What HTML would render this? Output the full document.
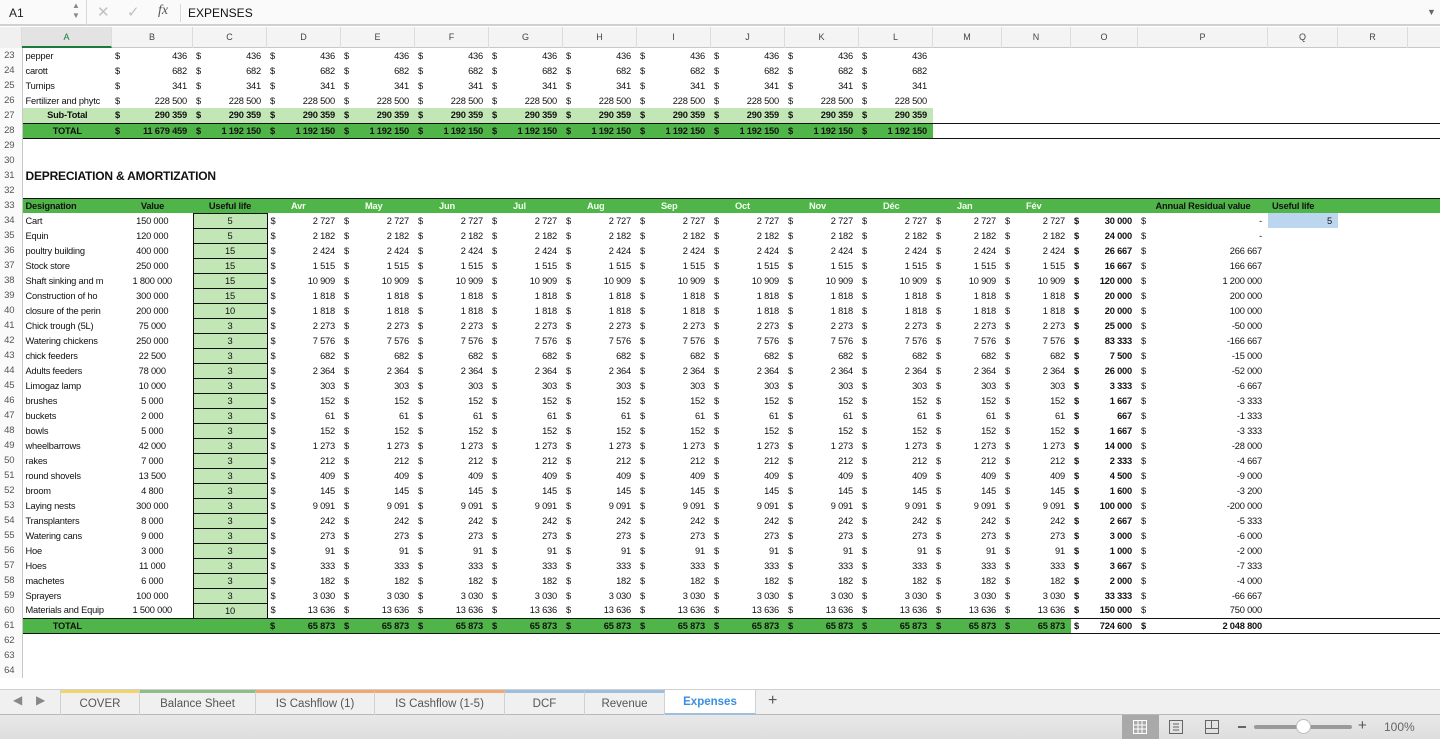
<!DOCTYPE html><html><head><meta charset="utf-8"><style>
*{margin:0;padding:0;box-sizing:border-box}
body{width:1440px;height:739px;overflow:hidden;background:#fff;font-family:"Liberation Sans",Arial,sans-serif;position:relative}
#fb{position:absolute;left:0;top:0;width:1440px;height:26px;background:#fafafa;border-bottom:2px solid #d0d0d0;font-size:12px}
#ch{position:absolute;left:0;top:27px;height:21px;width:1440px;background:#f4f4f4;border-bottom:1px solid #c8c8c8;font-size:9px;color:#444}
#ch div{position:absolute;top:0;height:21px;line-height:21px;text-align:center;border-right:1px solid #dcdcdc}
table{position:absolute;left:0;top:48px;border-collapse:collapse;table-layout:fixed;width:1440px;font-size:9.3px;letter-spacing:-0.2px}
td{height:15px;line-height:14px;padding:0 6px 0 3px;white-space:nowrap;overflow:hidden;text-align:right;color:#111}
td.h{text-align:center;padding:0 3px 0 0;color:#555;font-size:9.5px;border-right:1px solid #c8c8c8;background:#fafafa}
td.l{text-align:left}
td.c{text-align:center;padding:0}
td i{float:left;font-style:normal}
td.g{background:#c3e6b6;text-align:center;border:1px solid #111;padding:0}
tr.st td{background:#c3e6b6;font-weight:bold}
tr.tt td{background:#50b548;font-weight:bold;border-top:1px solid #111;border-bottom:1px solid #111}
tr.tt td.n{background:#fff}
tr.st td.n{background:#fff;font-weight:normal}
tr.hd td{background:#50b548;font-weight:bold;border-top:1px solid #111}
tr.hd td.w{color:#f2fff0;font-weight:bold;text-align:left;padding-left:24px}
tr td.h{background:#fafafa!important;color:#555!important;font-weight:normal!important;border-top:none!important;border-bottom:none!important}
td.b{font-weight:bold}
#tabs{position:absolute;left:0;top:689px;width:1440px;height:26px;background:#f0f0f0;border-top:1px solid #d0d0d0;border-bottom:1px solid #b8b8b8;font-size:11.5px;color:#555}
#tabs div.t{position:absolute;top:0;height:25px;line-height:22px;text-align:center;border-right:1px solid #d0d0d0;border-top:3px solid}
#sb{position:absolute;left:0;top:715px;width:1440px;height:24px;background:linear-gradient(#e8e8e8,#dedede)}
</style></head><body>
<div id="fb">
<div style="position:absolute;left:9px;top:6px;color:#222">A1</div>
<div style="position:absolute;left:72px;top:1px;font-size:8px;color:#888;line-height:10px">▲<br>▼</div>
<div style="position:absolute;left:86px;top:0;width:1px;height:26px;background:#d8d8d8"></div>
<div style="position:absolute;left:97px;top:3px;font-size:15px;color:#c0c0c0">✕</div>
<div style="position:absolute;left:127px;top:3px;font-size:15px;color:#c0c0c0">✓</div>
<div style="position:absolute;left:158px;top:3px;font-size:14px;font-style:italic;font-family:'Liberation Serif',serif;color:#555">fx</div>
<div style="position:absolute;left:180px;top:4px;width:1px;height:18px;background:#d8d8d8"></div>
<div style="position:absolute;left:188px;top:6px;color:#111">EXPENSES</div>
<div style="position:absolute;left:1427px;top:7px;font-size:9px;color:#666">▼</div>
</div>
<div id="ch">
<div style="left:0;width:22px;background:#f0f0f0"></div>
<div style="left:22px;width:90px;background:#e3e3e3;color:#1a7a3a;border-bottom:2px solid #1a7a3a">A</div>
<div style="left:112px;width:81px">B</div><div style="left:193px;width:74px">C</div><div style="left:267px;width:74px">D</div><div style="left:341px;width:74px">E</div><div style="left:415px;width:74px">F</div><div style="left:489px;width:74px">G</div><div style="left:563px;width:74px">H</div><div style="left:637px;width:74px">I</div><div style="left:711px;width:74px">J</div><div style="left:785px;width:74px">K</div><div style="left:859px;width:74px">L</div><div style="left:933px;width:69px">M</div><div style="left:1002px;width:69px">N</div><div style="left:1071px;width:67px">O</div><div style="left:1138px;width:130px">P</div><div style="left:1268px;width:70px">Q</div><div style="left:1338px;width:70px">R</div>
</div>
<table>
<colgroup><col style="width:22px"><col style="width:90px"><col style="width:81px"><col style="width:74px"><col style="width:74px"><col style="width:74px"><col style="width:74px"><col style="width:74px"><col style="width:74px"><col style="width:74px"><col style="width:74px"><col style="width:74px"><col style="width:74px"><col style="width:69px"><col style="width:69px"><col style="width:67px"><col style="width:130px"><col style="width:70px"><col style="width:70px"><col style="width:32px"></colgroup>
<tr><td class="h">23</td><td class="l">pepper</td><td><i>$</i>436</td><td><i>$</i>436</td><td><i>$</i>436</td><td><i>$</i>436</td><td><i>$</i>436</td><td><i>$</i>436</td><td><i>$</i>436</td><td><i>$</i>436</td><td><i>$</i>436</td><td><i>$</i>436</td><td><i>$</i>436</td><td></td><td></td><td></td><td></td><td></td><td></td><td></td></tr>
<tr><td class="h">24</td><td class="l">carott</td><td><i>$</i>682</td><td><i>$</i>682</td><td><i>$</i>682</td><td><i>$</i>682</td><td><i>$</i>682</td><td><i>$</i>682</td><td><i>$</i>682</td><td><i>$</i>682</td><td><i>$</i>682</td><td><i>$</i>682</td><td><i>$</i>682</td><td></td><td></td><td></td><td></td><td></td><td></td><td></td></tr>
<tr><td class="h">25</td><td class="l">Turnips</td><td><i>$</i>341</td><td><i>$</i>341</td><td><i>$</i>341</td><td><i>$</i>341</td><td><i>$</i>341</td><td><i>$</i>341</td><td><i>$</i>341</td><td><i>$</i>341</td><td><i>$</i>341</td><td><i>$</i>341</td><td><i>$</i>341</td><td></td><td></td><td></td><td></td><td></td><td></td><td></td></tr>
<tr><td class="h">26</td><td class="l">Fertilizer and phytc</td><td><i>$</i>228 500</td><td><i>$</i>228 500</td><td><i>$</i>228 500</td><td><i>$</i>228 500</td><td><i>$</i>228 500</td><td><i>$</i>228 500</td><td><i>$</i>228 500</td><td><i>$</i>228 500</td><td><i>$</i>228 500</td><td><i>$</i>228 500</td><td><i>$</i>228 500</td><td></td><td></td><td></td><td></td><td></td><td></td><td></td></tr>
<tr class="st"><td class="h">27</td><td class="c">Sub-Total</td><td><i>$</i>290 359</td><td><i>$</i>290 359</td><td><i>$</i>290 359</td><td><i>$</i>290 359</td><td><i>$</i>290 359</td><td><i>$</i>290 359</td><td><i>$</i>290 359</td><td><i>$</i>290 359</td><td><i>$</i>290 359</td><td><i>$</i>290 359</td><td><i>$</i>290 359</td><td class="n"></td><td class="n"></td><td class="n"></td><td class="n"></td><td class="n"></td><td class="n"></td><td class="n"></td></tr>
<tr class="tt"><td class="h">28</td><td class="c">TOTAL</td><td><i>$</i>11 679 459</td><td><i>$</i>1 192 150</td><td><i>$</i>1 192 150</td><td><i>$</i>1 192 150</td><td><i>$</i>1 192 150</td><td><i>$</i>1 192 150</td><td><i>$</i>1 192 150</td><td><i>$</i>1 192 150</td><td><i>$</i>1 192 150</td><td><i>$</i>1 192 150</td><td><i>$</i>1 192 150</td><td class="n"></td><td class="n"></td><td class="n"></td><td class="n"></td><td class="n"></td><td class="n"></td><td class="n"></td></tr>
<tr><td class="h">29</td><td colspan="19"></td></tr>
<tr><td class="h">30</td><td colspan="19"></td></tr>
<tr><td class="h">31</td><td class="l" colspan="4" style="font-weight:bold;font-size:12px;overflow:visible">DEPRECIATION &amp; AMORTIZATION</td><td colspan="15"></td></tr>
<tr><td class="h">32</td><td colspan="19"></td></tr>
<tr class="hd"><td class="h">33</td><td class="l">Designation</td><td class="c">Value</td><td class="c">Useful life</td><td class="w">Avr</td><td class="w">May</td><td class="w">Jun</td><td class="w">Jul</td><td class="w">Aug</td><td class="w">Sep</td><td class="w">Oct</td><td class="w">Nov</td><td class="w">Déc</td><td class="w">Jan</td><td class="w">Fév</td><td></td><td class="c">Annual Residual value</td><td class="l" style="padding-left:4px">Useful life</td><td></td><td></td></tr>
<tr><td class="h">34</td><td class="l">Cart</td><td class="c">150 000</td><td class="g">5</td><td><i>$</i>2 727</td><td><i>$</i>2 727</td><td><i>$</i>2 727</td><td><i>$</i>2 727</td><td><i>$</i>2 727</td><td><i>$</i>2 727</td><td><i>$</i>2 727</td><td><i>$</i>2 727</td><td><i>$</i>2 727</td><td><i>$</i>2 727</td><td><i>$</i>2 727</td><td class="b"><i>$</i>30 000</td><td><i>$</i>-</td><td style="background:#bcd6ef">5</td><td></td><td></td></tr>
<tr><td class="h">35</td><td class="l">Equin</td><td class="c">120 000</td><td class="g">5</td><td><i>$</i>2 182</td><td><i>$</i>2 182</td><td><i>$</i>2 182</td><td><i>$</i>2 182</td><td><i>$</i>2 182</td><td><i>$</i>2 182</td><td><i>$</i>2 182</td><td><i>$</i>2 182</td><td><i>$</i>2 182</td><td><i>$</i>2 182</td><td><i>$</i>2 182</td><td class="b"><i>$</i>24 000</td><td><i>$</i>-</td><td></td><td></td><td></td></tr>
<tr><td class="h">36</td><td class="l">poultry building</td><td class="c">400 000</td><td class="g">15</td><td><i>$</i>2 424</td><td><i>$</i>2 424</td><td><i>$</i>2 424</td><td><i>$</i>2 424</td><td><i>$</i>2 424</td><td><i>$</i>2 424</td><td><i>$</i>2 424</td><td><i>$</i>2 424</td><td><i>$</i>2 424</td><td><i>$</i>2 424</td><td><i>$</i>2 424</td><td class="b"><i>$</i>26 667</td><td><i>$</i>266 667</td><td></td><td></td><td></td></tr>
<tr><td class="h">37</td><td class="l">Stock store</td><td class="c">250 000</td><td class="g">15</td><td><i>$</i>1 515</td><td><i>$</i>1 515</td><td><i>$</i>1 515</td><td><i>$</i>1 515</td><td><i>$</i>1 515</td><td><i>$</i>1 515</td><td><i>$</i>1 515</td><td><i>$</i>1 515</td><td><i>$</i>1 515</td><td><i>$</i>1 515</td><td><i>$</i>1 515</td><td class="b"><i>$</i>16 667</td><td><i>$</i>166 667</td><td></td><td></td><td></td></tr>
<tr><td class="h">38</td><td class="l">Shaft sinking and m</td><td class="c">1 800 000</td><td class="g">15</td><td><i>$</i>10 909</td><td><i>$</i>10 909</td><td><i>$</i>10 909</td><td><i>$</i>10 909</td><td><i>$</i>10 909</td><td><i>$</i>10 909</td><td><i>$</i>10 909</td><td><i>$</i>10 909</td><td><i>$</i>10 909</td><td><i>$</i>10 909</td><td><i>$</i>10 909</td><td class="b"><i>$</i>120 000</td><td><i>$</i>1 200 000</td><td></td><td></td><td></td></tr>
<tr><td class="h">39</td><td class="l">Construction of ho</td><td class="c">300 000</td><td class="g">15</td><td><i>$</i>1 818</td><td><i>$</i>1 818</td><td><i>$</i>1 818</td><td><i>$</i>1 818</td><td><i>$</i>1 818</td><td><i>$</i>1 818</td><td><i>$</i>1 818</td><td><i>$</i>1 818</td><td><i>$</i>1 818</td><td><i>$</i>1 818</td><td><i>$</i>1 818</td><td class="b"><i>$</i>20 000</td><td><i>$</i>200 000</td><td></td><td></td><td></td></tr>
<tr><td class="h">40</td><td class="l">closure of the perin</td><td class="c">200 000</td><td class="g">10</td><td><i>$</i>1 818</td><td><i>$</i>1 818</td><td><i>$</i>1 818</td><td><i>$</i>1 818</td><td><i>$</i>1 818</td><td><i>$</i>1 818</td><td><i>$</i>1 818</td><td><i>$</i>1 818</td><td><i>$</i>1 818</td><td><i>$</i>1 818</td><td><i>$</i>1 818</td><td class="b"><i>$</i>20 000</td><td><i>$</i>100 000</td><td></td><td></td><td></td></tr>
<tr><td class="h">41</td><td class="l">Chick trough (5L)</td><td class="c">75 000</td><td class="g">3</td><td><i>$</i>2 273</td><td><i>$</i>2 273</td><td><i>$</i>2 273</td><td><i>$</i>2 273</td><td><i>$</i>2 273</td><td><i>$</i>2 273</td><td><i>$</i>2 273</td><td><i>$</i>2 273</td><td><i>$</i>2 273</td><td><i>$</i>2 273</td><td><i>$</i>2 273</td><td class="b"><i>$</i>25 000</td><td><i>$</i>-50 000</td><td></td><td></td><td></td></tr>
<tr><td class="h">42</td><td class="l">Watering chickens</td><td class="c">250 000</td><td class="g">3</td><td><i>$</i>7 576</td><td><i>$</i>7 576</td><td><i>$</i>7 576</td><td><i>$</i>7 576</td><td><i>$</i>7 576</td><td><i>$</i>7 576</td><td><i>$</i>7 576</td><td><i>$</i>7 576</td><td><i>$</i>7 576</td><td><i>$</i>7 576</td><td><i>$</i>7 576</td><td class="b"><i>$</i>83 333</td><td><i>$</i>-166 667</td><td></td><td></td><td></td></tr>
<tr><td class="h">43</td><td class="l">chick feeders</td><td class="c">22 500</td><td class="g">3</td><td><i>$</i>682</td><td><i>$</i>682</td><td><i>$</i>682</td><td><i>$</i>682</td><td><i>$</i>682</td><td><i>$</i>682</td><td><i>$</i>682</td><td><i>$</i>682</td><td><i>$</i>682</td><td><i>$</i>682</td><td><i>$</i>682</td><td class="b"><i>$</i>7 500</td><td><i>$</i>-15 000</td><td></td><td></td><td></td></tr>
<tr><td class="h">44</td><td class="l">Adults feeders</td><td class="c">78 000</td><td class="g">3</td><td><i>$</i>2 364</td><td><i>$</i>2 364</td><td><i>$</i>2 364</td><td><i>$</i>2 364</td><td><i>$</i>2 364</td><td><i>$</i>2 364</td><td><i>$</i>2 364</td><td><i>$</i>2 364</td><td><i>$</i>2 364</td><td><i>$</i>2 364</td><td><i>$</i>2 364</td><td class="b"><i>$</i>26 000</td><td><i>$</i>-52 000</td><td></td><td></td><td></td></tr>
<tr><td class="h">45</td><td class="l">Limogaz lamp</td><td class="c">10 000</td><td class="g">3</td><td><i>$</i>303</td><td><i>$</i>303</td><td><i>$</i>303</td><td><i>$</i>303</td><td><i>$</i>303</td><td><i>$</i>303</td><td><i>$</i>303</td><td><i>$</i>303</td><td><i>$</i>303</td><td><i>$</i>303</td><td><i>$</i>303</td><td class="b"><i>$</i>3 333</td><td><i>$</i>-6 667</td><td></td><td></td><td></td></tr>
<tr><td class="h">46</td><td class="l">brushes</td><td class="c">5 000</td><td class="g">3</td><td><i>$</i>152</td><td><i>$</i>152</td><td><i>$</i>152</td><td><i>$</i>152</td><td><i>$</i>152</td><td><i>$</i>152</td><td><i>$</i>152</td><td><i>$</i>152</td><td><i>$</i>152</td><td><i>$</i>152</td><td><i>$</i>152</td><td class="b"><i>$</i>1 667</td><td><i>$</i>-3 333</td><td></td><td></td><td></td></tr>
<tr><td class="h">47</td><td class="l">buckets</td><td class="c">2 000</td><td class="g">3</td><td><i>$</i>61</td><td><i>$</i>61</td><td><i>$</i>61</td><td><i>$</i>61</td><td><i>$</i>61</td><td><i>$</i>61</td><td><i>$</i>61</td><td><i>$</i>61</td><td><i>$</i>61</td><td><i>$</i>61</td><td><i>$</i>61</td><td class="b"><i>$</i>667</td><td><i>$</i>-1 333</td><td></td><td></td><td></td></tr>
<tr><td class="h">48</td><td class="l">bowls</td><td class="c">5 000</td><td class="g">3</td><td><i>$</i>152</td><td><i>$</i>152</td><td><i>$</i>152</td><td><i>$</i>152</td><td><i>$</i>152</td><td><i>$</i>152</td><td><i>$</i>152</td><td><i>$</i>152</td><td><i>$</i>152</td><td><i>$</i>152</td><td><i>$</i>152</td><td class="b"><i>$</i>1 667</td><td><i>$</i>-3 333</td><td></td><td></td><td></td></tr>
<tr><td class="h">49</td><td class="l">wheelbarrows</td><td class="c">42 000</td><td class="g">3</td><td><i>$</i>1 273</td><td><i>$</i>1 273</td><td><i>$</i>1 273</td><td><i>$</i>1 273</td><td><i>$</i>1 273</td><td><i>$</i>1 273</td><td><i>$</i>1 273</td><td><i>$</i>1 273</td><td><i>$</i>1 273</td><td><i>$</i>1 273</td><td><i>$</i>1 273</td><td class="b"><i>$</i>14 000</td><td><i>$</i>-28 000</td><td></td><td></td><td></td></tr>
<tr><td class="h">50</td><td class="l">rakes</td><td class="c">7 000</td><td class="g">3</td><td><i>$</i>212</td><td><i>$</i>212</td><td><i>$</i>212</td><td><i>$</i>212</td><td><i>$</i>212</td><td><i>$</i>212</td><td><i>$</i>212</td><td><i>$</i>212</td><td><i>$</i>212</td><td><i>$</i>212</td><td><i>$</i>212</td><td class="b"><i>$</i>2 333</td><td><i>$</i>-4 667</td><td></td><td></td><td></td></tr>
<tr><td class="h">51</td><td class="l">round shovels</td><td class="c">13 500</td><td class="g">3</td><td><i>$</i>409</td><td><i>$</i>409</td><td><i>$</i>409</td><td><i>$</i>409</td><td><i>$</i>409</td><td><i>$</i>409</td><td><i>$</i>409</td><td><i>$</i>409</td><td><i>$</i>409</td><td><i>$</i>409</td><td><i>$</i>409</td><td class="b"><i>$</i>4 500</td><td><i>$</i>-9 000</td><td></td><td></td><td></td></tr>
<tr><td class="h">52</td><td class="l">broom</td><td class="c">4 800</td><td class="g">3</td><td><i>$</i>145</td><td><i>$</i>145</td><td><i>$</i>145</td><td><i>$</i>145</td><td><i>$</i>145</td><td><i>$</i>145</td><td><i>$</i>145</td><td><i>$</i>145</td><td><i>$</i>145</td><td><i>$</i>145</td><td><i>$</i>145</td><td class="b"><i>$</i>1 600</td><td><i>$</i>-3 200</td><td></td><td></td><td></td></tr>
<tr><td class="h">53</td><td class="l">Laying nests</td><td class="c">300 000</td><td class="g">3</td><td><i>$</i>9 091</td><td><i>$</i>9 091</td><td><i>$</i>9 091</td><td><i>$</i>9 091</td><td><i>$</i>9 091</td><td><i>$</i>9 091</td><td><i>$</i>9 091</td><td><i>$</i>9 091</td><td><i>$</i>9 091</td><td><i>$</i>9 091</td><td><i>$</i>9 091</td><td class="b"><i>$</i>100 000</td><td><i>$</i>-200 000</td><td></td><td></td><td></td></tr>
<tr><td class="h">54</td><td class="l">Transplanters</td><td class="c">8 000</td><td class="g">3</td><td><i>$</i>242</td><td><i>$</i>242</td><td><i>$</i>242</td><td><i>$</i>242</td><td><i>$</i>242</td><td><i>$</i>242</td><td><i>$</i>242</td><td><i>$</i>242</td><td><i>$</i>242</td><td><i>$</i>242</td><td><i>$</i>242</td><td class="b"><i>$</i>2 667</td><td><i>$</i>-5 333</td><td></td><td></td><td></td></tr>
<tr><td class="h">55</td><td class="l">Watering cans</td><td class="c">9 000</td><td class="g">3</td><td><i>$</i>273</td><td><i>$</i>273</td><td><i>$</i>273</td><td><i>$</i>273</td><td><i>$</i>273</td><td><i>$</i>273</td><td><i>$</i>273</td><td><i>$</i>273</td><td><i>$</i>273</td><td><i>$</i>273</td><td><i>$</i>273</td><td class="b"><i>$</i>3 000</td><td><i>$</i>-6 000</td><td></td><td></td><td></td></tr>
<tr><td class="h">56</td><td class="l">Hoe</td><td class="c">3 000</td><td class="g">3</td><td><i>$</i>91</td><td><i>$</i>91</td><td><i>$</i>91</td><td><i>$</i>91</td><td><i>$</i>91</td><td><i>$</i>91</td><td><i>$</i>91</td><td><i>$</i>91</td><td><i>$</i>91</td><td><i>$</i>91</td><td><i>$</i>91</td><td class="b"><i>$</i>1 000</td><td><i>$</i>-2 000</td><td></td><td></td><td></td></tr>
<tr><td class="h">57</td><td class="l">Hoes</td><td class="c">11 000</td><td class="g">3</td><td><i>$</i>333</td><td><i>$</i>333</td><td><i>$</i>333</td><td><i>$</i>333</td><td><i>$</i>333</td><td><i>$</i>333</td><td><i>$</i>333</td><td><i>$</i>333</td><td><i>$</i>333</td><td><i>$</i>333</td><td><i>$</i>333</td><td class="b"><i>$</i>3 667</td><td><i>$</i>-7 333</td><td></td><td></td><td></td></tr>
<tr><td class="h">58</td><td class="l">machetes</td><td class="c">6 000</td><td class="g">3</td><td><i>$</i>182</td><td><i>$</i>182</td><td><i>$</i>182</td><td><i>$</i>182</td><td><i>$</i>182</td><td><i>$</i>182</td><td><i>$</i>182</td><td><i>$</i>182</td><td><i>$</i>182</td><td><i>$</i>182</td><td><i>$</i>182</td><td class="b"><i>$</i>2 000</td><td><i>$</i>-4 000</td><td></td><td></td><td></td></tr>
<tr><td class="h">59</td><td class="l">Sprayers</td><td class="c">100 000</td><td class="g">3</td><td><i>$</i>3 030</td><td><i>$</i>3 030</td><td><i>$</i>3 030</td><td><i>$</i>3 030</td><td><i>$</i>3 030</td><td><i>$</i>3 030</td><td><i>$</i>3 030</td><td><i>$</i>3 030</td><td><i>$</i>3 030</td><td><i>$</i>3 030</td><td><i>$</i>3 030</td><td class="b"><i>$</i>33 333</td><td><i>$</i>-66 667</td><td></td><td></td><td></td></tr>
<tr><td class="h">60</td><td class="l">Materials and Equip</td><td class="c">1 500 000</td><td class="g">10</td><td><i>$</i>13 636</td><td><i>$</i>13 636</td><td><i>$</i>13 636</td><td><i>$</i>13 636</td><td><i>$</i>13 636</td><td><i>$</i>13 636</td><td><i>$</i>13 636</td><td><i>$</i>13 636</td><td><i>$</i>13 636</td><td><i>$</i>13 636</td><td><i>$</i>13 636</td><td class="b"><i>$</i>150 000</td><td><i>$</i>750 000</td><td></td><td></td><td></td></tr>
<tr class="tt"><td class="h">61</td><td class="c">TOTAL</td><td></td><td></td><td><i>$</i>65 873</td><td><i>$</i>65 873</td><td><i>$</i>65 873</td><td><i>$</i>65 873</td><td><i>$</i>65 873</td><td><i>$</i>65 873</td><td><i>$</i>65 873</td><td><i>$</i>65 873</td><td><i>$</i>65 873</td><td><i>$</i>65 873</td><td><i>$</i>65 873</td><td class="n"><i>$</i>724 600</td><td class="n"><i>$</i>2 048 800</td><td class="n"></td><td class="n"></td><td class="n"></td></tr>
<tr><td class="h">62</td><td colspan="19"></td></tr>
<tr><td class="h">63</td><td colspan="19"></td></tr>
<tr><td class="h">64</td><td colspan="19"></td></tr>
</table>
<div id="tabs">
<div style="position:absolute;left:13px;top:3px;font-size:12px;color:#888">◀</div>
<div style="position:absolute;left:36px;top:3px;font-size:12px;color:#888">▶</div>
<div style="position:absolute;left:60px;top:0;width:1px;height:25px;background:#d0d0d0"></div>
<div class="t" style="left:61px;width:79px;border-top-color:#f2d46a">COVER</div>
<div class="t" style="left:140px;width:116px;border-top-color:#8fbd8a">Balance Sheet</div>
<div class="t" style="left:256px;width:119px;border-top-color:#f0a870">IS Cashflow (1)</div>
<div class="t" style="left:375px;width:130px;border-top-color:#f0a870">IS Cashflow (1-5)</div>
<div class="t" style="left:505px;width:80px;border-top-color:#9bbfdc">DCF</div>
<div class="t" style="left:585px;width:80px;border-top-color:#9bbfdc">Revenue</div>
<div class="t" style="left:665px;width:91px;border-top:none;background:#fff;color:#3a8ee0;font-weight:bold;line-height:24px;height:25px;border-bottom:2px solid #9bbfdc">Expenses</div>
<div style="position:absolute;left:768px;top:2px;font-size:16px;color:#555">+</div>
</div>
<div id="sb">
<div style="position:absolute;left:1122px;top:0;width:37px;height:24px;background:#a9a9a9"></div>
<svg style="position:absolute;left:1133px;top:5px" width="14" height="14"><g fill="none" stroke="#fff" stroke-width="1"><rect x="0.5" y="0.5" width="13" height="13"/><path d="M0 5h14M0 9h14M5 0v14M9 0v14"/></g></svg>
<svg style="position:absolute;left:1169px;top:5px" width="14" height="14"><g fill="none" stroke="#666" stroke-width="1"><rect x="0.5" y="0.5" width="13" height="13"/><path d="M4 4h6M4 7h6M4 10h6"/></g></svg>
<svg style="position:absolute;left:1205px;top:5px" width="14" height="14"><g fill="none" stroke="#666" stroke-width="1"><path d="M0.5 0.5h13v13h-13zM0.5 8.5h6v-8M6.5 8.5h7"/></g></svg>
<div style="position:absolute;left:1238px;top:11px;width:8px;height:2px;background:#666"></div>
<div style="position:absolute;left:1254px;top:10px;width:98px;height:4px;border-radius:2px;background:#9a9a9a"></div>
<div style="position:absolute;left:1296px;top:4px;width:15px;height:15px;border-radius:50%;background:#fff;border:1px solid #bbb"></div>
<div style="position:absolute;left:1358px;top:2px;font-size:15px;color:#555">+</div>
<div style="position:absolute;left:1384px;top:5px;font-size:12px;color:#666">100%</div>
</div>
</body></html>
